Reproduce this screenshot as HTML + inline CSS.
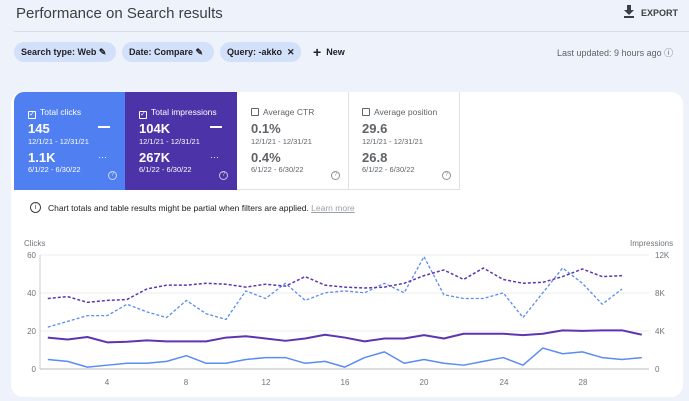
<!DOCTYPE html>
<html><head><meta charset="utf-8"><style>
*{margin:0;padding:0;box-sizing:border-box}
body{width:689px;height:401px;overflow:hidden;background:#eef2fa;font-family:"Liberation Sans",sans-serif;color:#3c4043;position:relative}
.abs{position:absolute}
.title{left:16px;top:5px;font-size:15px;color:#3c4043}
.hr{left:14px;top:31px;width:675px;height:1px;background:#dadce0}
.chip{top:42px;height:20px;border-radius:10px;background:#d3e0fa;font-size:9px;font-weight:bold;color:#202124;line-height:20px;padding-left:7px}
.card{left:11px;top:92px;width:672px;height:305px;background:#fff;border-radius:12px}
.tile{top:92px;height:98px;width:112px;font-size:8px}
.tile .l{position:absolute;left:14px;top:15px;font-size:8.5px}
.tile .v{position:absolute;left:14px;font-size:13px;font-weight:bold}
.tile .d{position:absolute;left:14px;font-size:7.5px}
.cb{display:inline-block;width:8px;height:8px;border:1px solid currentColor;border-radius:1px;vertical-align:-1px;margin-right:4px;font-size:7px;line-height:6px;text-align:center}
.q{position:absolute;left:94px;top:79px;width:9px;height:9px;border:1px solid currentColor;border-radius:50%;font-size:6px;text-align:center;line-height:7px;opacity:.7}
</style></head><body>
<div class="abs title">Performance on Search results</div>
<svg class="abs" style="left:624px;top:5px" width="10" height="13"><path d="M3 0h4v5h3l-5 5-5-5h3z M0 11h10v2H0z" fill="#3c4043"/></svg>
<div class="abs" style="left:641px;top:8px;font-size:9px;font-weight:bold;color:#3c4043">EXPORT</div>
<div class="abs hr"></div>
<div class="abs chip" style="left:14px;width:102px">Search type: Web ✎</div>
<div class="abs chip" style="left:122px;width:92px">Date: Compare ✎</div>
<div class="abs chip" style="left:220px;width:81px">Query: -akko&nbsp; ✕</div>
<div class="abs" style="left:313px;top:44px;font-size:9px;font-weight:bold;color:#202124"><span style="font-size:14px;vertical-align:-2px">+</span>&nbsp; New</div>
<div class="abs" style="left:557px;top:46px;font-size:9px;color:#5f6368">Last updated: 9 hours ago ⓘ</div>
<div class="abs card"></div>
<div class="abs tile" style="left:14px;background:#4f7ff0;color:#fff;border-top-left-radius:10px">
<div class="l"><span class="cb">✓</span>Total clicks</div>
<div class="v" style="top:29px">145</div><div class="abs" style="left:84px;top:34px;width:12px;height:2px;background:#fff"></div>
<div class="d" style="top:45px">12/1/21 - 12/31/21</div>
<div class="v" style="top:58px">1.1K</div><div class="abs" style="left:84px;top:60px;font-size:9px">···</div>
<div class="d" style="top:73px">6/1/22 - 6/30/22</div><div class="q">?</div></div>
<div class="abs tile" style="left:125px;background:#4c33a7;color:#fff">
<div class="l"><span class="cb">✓</span>Total impressions</div>
<div class="v" style="top:29px">104K</div><div class="abs" style="left:85px;top:34px;width:12px;height:2px;background:#fff"></div>
<div class="d" style="top:45px">12/1/21 - 12/31/21</div>
<div class="v" style="top:58px">267K</div><div class="abs" style="left:85px;top:60px;font-size:9px">···</div>
<div class="d" style="top:73px">6/1/22 - 6/30/22</div><div class="q">?</div></div>
<div class="abs tile" style="left:237px;color:#5f6368;border-right:1px solid #e0e0e0;border-bottom:1px solid #e0e0e0">
<div class="l"><span class="cb"></span>Average CTR</div>
<div class="v" style="top:29px">0.1%</div>
<div class="d" style="top:45px">12/1/21 - 12/31/21</div>
<div class="v" style="top:58px">0.4%</div>
<div class="d" style="top:73px">6/1/22 - 6/30/22</div><div class="q">?</div></div>
<div class="abs tile" style="left:348px;color:#5f6368;border-right:1px solid #e0e0e0;border-bottom:1px solid #e0e0e0">
<div class="l"><span class="cb"></span>Average position</div>
<div class="v" style="top:29px">29.6</div>
<div class="d" style="top:45px">12/1/21 - 12/31/21</div>
<div class="v" style="top:58px">26.8</div>
<div class="d" style="top:73px">6/1/22 - 6/30/22</div><div class="q">?</div></div>
<div class="abs" style="left:30px;top:202px;width:11px;height:11px;border:1px solid #3c4043;border-radius:50%;font-size:7px;text-align:center;line-height:9px">i</div>
<div class="abs" style="left:48px;top:203px;font-size:8.5px;color:#202124">Chart totals and table results might be partial when filters are applied. <span style="color:#9aa0a6;text-decoration:underline">Learn more</span></div>
<svg class="abs" style="left:0;top:0" width="689" height="401">
<g font-size="8" fill="#70757a" font-family="Liberation Sans">
<text x="24" y="246">Clicks</text><text x="630" y="246">Impressions</text>
<text x="36" y="258" text-anchor="end">60</text><text x="36" y="334" text-anchor="end">20</text><text x="36" y="296" text-anchor="end">40</text><text x="36" y="372" text-anchor="end">0</text>
<text x="655" y="258">12K</text><text x="655" y="296">8K</text><text x="655" y="334">4K</text><text x="655" y="372">0</text>
<text x="107" y="385" text-anchor="middle">4</text><text x="186" y="385" text-anchor="middle">8</text><text x="266" y="385" text-anchor="middle">12</text><text x="345" y="385" text-anchor="middle">16</text><text x="424" y="385" text-anchor="middle">20</text><text x="504" y="385" text-anchor="middle">24</text><text x="583" y="385" text-anchor="middle">28</text>
</g>
<g stroke="#ececec" stroke-width="1"><line x1="40" x2="649" y1="255" y2="255"/><line x1="40" x2="649" y1="293" y2="293"/><line x1="40" x2="649" y1="331" y2="331"/></g>
<line x1="40" x2="40" y1="255" y2="369" stroke="#ccc"/><line x1="40" x2="649" y1="369" y2="369" stroke="#bbb"/>
<g transform="translate(28,369) scale(19.8,-1.905)" fill="none" stroke-linejoin="round">
<polyline vector-effect="non-scaling-stroke" stroke="#5a8cf2" stroke-width="1.5" points="1,5 2,4 3,1 4,2 5,3 6,3 7,4 8,7 9,3 10,3 11,5 12,6 13,6 14,3 15,4 16,1 17,6 18,9 19,3 20,5 21,3 22,2 23,4 24,6 25,2 26,11 27,8 28,9 29,6 30,5 31,6"/>
<polyline vector-effect="non-scaling-stroke" stroke="#5e35b1" stroke-width="2" points="1,16.5 2,15.5 3,16.8 4,14 5,14.3 6,15 7,14.5 8,14.5 9,14.5 10,16.5 11,17.2 12,16 13,14.8 14,16 15,18 16,16.5 17,14.5 18,16 19,16 20,17.8 21,16 22,18.5 23,18.5 24,18.5 25,17.8 26,18.5 27,20.3 28,20 29,20.3 30,20.3 31,18"/>
<polyline vector-effect="non-scaling-stroke" stroke="#5a8cf2" stroke-width="1.3" stroke-dasharray="3,2" points="1,22 2,25 3,28 4,28 5,34 6,30 7,27 8,36 9,29 10,26 11,41 12,37 13,45 14,36 15,40 16,41 17,40 18,45 19,40 20,59 21,39 22,37 23,37 24,40 25,27 26,40 27,53 28,45 29,34 30,42"/>
<polyline vector-effect="non-scaling-stroke" stroke="#5e35b1" stroke-width="1.5" stroke-dasharray="3,2" points="1,37 2,38 3,35 4,36 5,36.5 6,42 7,44 8,44 9,45 10,44.5 11,43 12,44.5 13,43.5 14,48.5 15,44 16,43 17,42.5 18,43 19,45 20,49 21,52 22,47 23,53 24,47 25,45 26,45.5 27,48.5 28,52.5 29,48.5 30,49"/>
</g>
</svg>
</body></html>
